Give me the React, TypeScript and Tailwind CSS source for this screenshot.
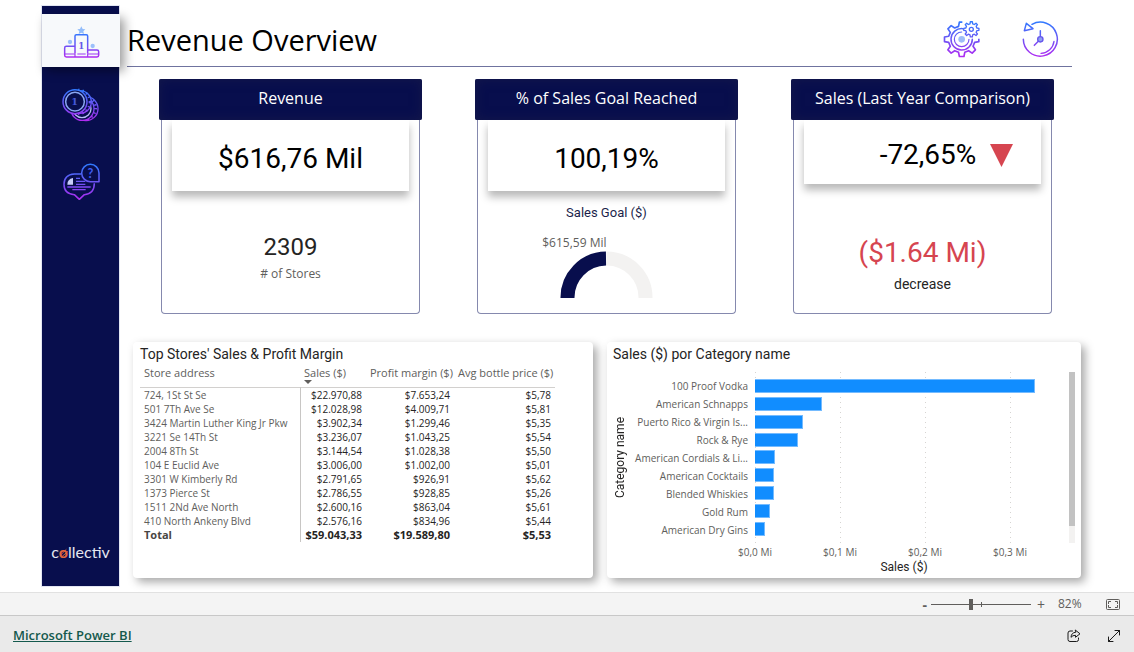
import React, { useState } from "react";

const SANS = "font-['Open_Sans','Noto_Sans',sans-serif]";
const DIN = "font-['Roboto','Liberation_Sans',sans-serif]";

function gearPath(cx: number, cy: number, outer: number, inner: number, teeth: number, turn: number) {
  const points: string[] = [];
  const step = (Math.PI * 2) / teeth;
  const offsets: [number, number][] = [
    [-0.3, inner],
    [-0.17, outer],
    [0.17, outer],
    [0.3, inner],
  ];
  for (let i = 0; i < teeth; i++) {
    offsets.forEach(([o, r]) => {
      const a = turn + (i + o) * step;
      points.push(`${(cx + Math.cos(a) * r).toFixed(1)} ${(cy + Math.sin(a) * r).toFixed(1)}`);
    });
  }
  return `M${points.join("L")}Z`;
}

function Gradient({ id, y1, y2 }: { id: string; y1: number; y2: number }) {
  return (
    <linearGradient id={id} gradientUnits="userSpaceOnUse" x1="0" x2="0" y1={y1} y2={y2}>
      <stop offset="0" stopColor="#2f7bff" />
      <stop offset="0.5" stopColor="#6b54f5" />
      <stop offset="1" stopColor="#b02bf2" />
    </linearGradient>
  );
}

function PodiumIcon() {
  return (
    <svg width="40" height="36" viewBox="63 72 120 108" fill="none" aria-hidden="true">
      <defs>
        <Gradient id="podium" y1={95} y2={170} />
      </defs>
      <g stroke="url(#podium)" strokeWidth="4.500" strokeLinejoin="round">
        <path d="M105 158V105q0-4 4-4h30q4 0 4 4v53" />
        <path d="M105 136H79q-5 0-5 5v22q0 5 5 5h92q5 0 5-5v-11q0-5-5-5h-28" />
        <path d="M74 159h31M112 159h25M143 159h33M105 159v9M143 159v9" strokeWidth="3.500" />
      </g>
      <text x="124" y="144" textAnchor="middle" fontSize="26" fontWeight="bold" fill="#6557e8" fontFamily="DejaVu Serif, serif">
        1
      </text>
      <path d="M124 76l4 8 8 1-6 6 2 8-8-4-8 4 2-8-6-6 8-1z" fill="#93bdfa" />
      <circle cx="90" cy="123" r="6.500" fill="#9cc0fb" />
      <circle cx="158" cy="135" r="6.500" fill="#9cc0fb" />
    </svg>
  );
}

function CoinsIcon() {
  return (
    <svg width="40" height="36" viewBox="63 261 120 108" fill="none" aria-hidden="true">
      <defs>
        <Gradient id="coins" y1={266} y2={362} />
      </defs>
      <circle cx="138" cy="326" r="36" stroke="url(#coins)" strokeWidth="4" />
      <circle cx="133" cy="324" r="33" stroke="url(#coins)" strokeWidth="10" strokeDasharray="4 9" />
      <circle cx="127" cy="326" r="35" fill="#080e4d" stroke="url(#coins)" strokeWidth="4" />
      <circle cx="126" cy="326" r="27" stroke="#b9bff5" strokeWidth="4" />
      <circle cx="120" cy="306" r="34" fill="#080e4d" stroke="url(#coins)" strokeWidth="4" />
      <circle cx="114" cy="306" r="36" stroke="url(#coins)" strokeWidth="8" strokeDasharray="4 9" />
      <circle cx="105" cy="305" r="36" fill="#080e4d" stroke="url(#coins)" strokeWidth="4.500" />
      <circle cx="105" cy="305" r="28" stroke="#8aa6f2" strokeWidth="4.500" />
      <text x="104" y="315" textAnchor="middle" fontSize="29" fontWeight="bold" fill="#4457d8" fontFamily="DejaVu Serif, serif">
        1
      </text>
    </svg>
  );
}

function ChatIcon() {
  return (
    <svg width="40" height="40" viewBox="63 486 120 120" fill="none" aria-hidden="true">
      <defs>
        <Gradient id="chat" y1={492} y2={600} />
      </defs>
      <g stroke="url(#chat)" strokeWidth="4.500" strokeLinejoin="round">
        <path d="M124 522h-21q-31 2-31 31t31 31l15 14 15-14q30-2 30-34" />
        <path d="M177 545h-26a26 26 0 1 1 26-26z" />
        <path d="M108 535h12M108 544h28M108 553h28M82 561h70M97 569h40" strokeWidth="4" />
      </g>
      <path d="M82 554q0-17 17-20v20z" fill="#c7cdf8" />
      <text x="151" y="533" textAnchor="middle" fontSize="38" fontWeight="bold" fill="#3f5cf0" fontFamily="Lato, sans-serif">
        ?
      </text>
    </svg>
  );
}

function GearsIcon() {
  return (
    <svg width="40" height="40" viewBox="36 30 120 120" fill="none" aria-hidden="true">
      <defs>
        <Gradient id="gears" y1={34} y2={140} />
        <mask id="gearGap">
          <rect x="36" y="30" width="120" height="120" fill="#fff" />
          <path d="M97 30h60v56h-20L97 60z" fill="#000" />
        </mask>
      </defs>
      <g stroke="url(#gears)" strokeWidth="5" strokeLinejoin="round" strokeLinecap="round">
        <path d={gearPath(95, 88, 52, 40, 8, 0)} mask="url(#gearGap)" />
        <path d="M98 56a32 32 0 1 0 29 32" strokeWidth="4.500" />
        <path d="M95 66a22 22 0 1 0 22 22" strokeWidth="3.500" />
        <path d={gearPath(124, 58, 23, 17, 8, 0)} strokeWidth="4" />
        <circle cx="124" cy="58" r="6" strokeWidth="4" />
      </g>
      <circle cx="95" cy="88" r="10" fill="#9fbcf8" />
    </svg>
  );
}

function HistoryIcon() {
  return (
    <svg width="40" height="40" viewBox="273 30 120 120" fill="none" aria-hidden="true">
      <defs>
        <Gradient id="history" y1={34} y2={140} />
      </defs>
      <g stroke="url(#history)" strokeWidth="4.500" strokeLinejoin="round" strokeLinecap="round">
        <path d="M280 88a51 51 0 1 0 26-45" />
        <path d="M289 40l-6 22 26-6z" />
        <path d="M372 94a41 41 0 0 1-39 36" strokeWidth="4" />
        <path d="M331 62v18M325 94l-12 12" />
      </g>
      <circle cx="331" cy="88" r="8" fill="#8fa0f0" stroke="#6656ec" strokeWidth="4" />
    </svg>
  );
}

function Logo() {
  return (
    <div className="flex justify-center pb-[22px] font-['Lato',sans-serif] text-[16px] leading-6 text-[#e4e6f0]">
      c
      <span className="relative font-bold text-[#e2653c]">
        o
        <svg className="absolute inset-x-0 top-2 h-[10px] w-full" viewBox="0 0 10 10" aria-hidden="true">
          <path d="M1 8L8 1M2 10L10 3" stroke="#e2653c" strokeWidth="1" />
        </svg>
      </span>
      llectiv
    </div>
  );
}

function Sidebar() {
  return (
    <nav aria-label="Report pages" className="flex h-[580px] w-[77px] shrink-0 flex-col bg-[#080e4d] pt-2 outline outline-[#e3e6f2]">
      <button aria-label="Revenue" className="z-10 flex h-[53px] w-[78px] items-center justify-center bg-[#f7f9fb] pt-1 shadow-[4px_4px_10px_rgba(0,0,0,0.4)]">
        <PodiumIcon />
      </button>
      <button aria-label="Sales" className="mt-5 flex h-9 w-full items-center justify-center">
        <CoinsIcon />
      </button>
      <button aria-label="Insights" className="mt-[39px] flex h-10 w-full items-center justify-center">
        <ChatIcon />
      </button>
      <div className="mt-auto">
        <Logo />
      </div>
    </nav>
  );
}

function KpiCard({ title, tall, value, children }: { title: string; tall: boolean; value: React.ReactNode; children: React.ReactNode }) {
  return (
    <section className="flex h-[235px] flex-col">
      <h2 className="z-10 flex h-[41px] items-center justify-center rounded-xs bg-[#080e4d] pb-1 text-[16px] text-white shadow-[inset_0_0_12px_#15194a]">
        {title}
      </h2>
      <div className={`mx-[2px] flex flex-1 flex-col rounded-b border border-t-0 border-[#8589ae] px-[10px] ${DIN}`}>
        <div
          className={`flex items-center justify-center bg-white text-[28px] text-black shadow-[0_6px_8px_rgba(0,0,0,0.28)] ${
            tall ? "h-[71px] pt-[6px]" : "h-16 pt-[6px]"
          }`}
        >
          {value}
        </div>
        {children}
      </div>
    </section>
  );
}

const stores = [
  ["724, 1St St Se", "$22.970,88", "$7.653,24", "$5,78"],
  ["501 7Th Ave Se", "$12.028,98", "$4.009,71", "$5,81"],
  ["3424 Martin Luther King Jr Pkw", "$3.902,34", "$1.299,46", "$5,35"],
  ["3221 Se 14Th St", "$3.236,07", "$1.043,25", "$5,54"],
  ["2004 8Th St", "$3.144,54", "$1.028,38", "$5,50"],
  ["104 E Euclid Ave", "$3.006,00", "$1.002,00", "$5,01"],
  ["3301 W Kimberly Rd", "$2.791,65", "$926,91", "$5,62"],
  ["1373 Pierce St", "$2.786,55", "$928,85", "$5,26"],
  ["1511 2Nd Ave North", "$2.600,16", "$863,04", "$5,61"],
  ["410 North Ankeny Blvd", "$2.576,16", "$834,96", "$5,44"],
];

function StoresPanel() {
  return (
    <section className="rounded bg-white px-[7px] pt-1 shadow-[4px_4px_10px_rgba(0,0,0,0.35)]">
      <h2 className={`text-[14px] leading-4 text-[#252423] ${DIN}`}>Top Stores' Sales &amp; Profit Margin</h2>
      <table className="w-[415px] table-fixed border-collapse whitespace-nowrap text-[11px] leading-[14px] text-[#252423]">
        <colgroup>
          <col className="w-40" />
          <col className="w-[66px]" />
          <col className="w-[88px]" />
          <col className="w-[101px]" />
        </colgroup>
        <thead className="text-[#605e5c]">
          <tr className="h-[25px] border-b border-[#d2d0ce] text-left align-top">
            <th className="px-1 pt-1 font-normal">Store address</th>
            <th className="px-1 pt-1 font-normal" aria-sort="descending">
              <span className="relative">
                Sales ($)
                <svg className="absolute left-0 top-[15px]" width="8" height="4" viewBox="0 0 8 4" aria-hidden="true">
                  <path d="M0 0h8L4 4z" fill="#605e5c" />
                </svg>
              </span>
            </th>
            <th className="px-1 pt-1 font-normal">Profit margin ($)</th>
            <th className="px-1 pt-1 font-normal">Avg bottle price ($)</th>
          </tr>
        </thead>
        <tbody className="text-[10px]">
          {stores.map(([name, sales, profit, price]) => (
            <tr key={name} className="h-[14px]">
              <td className="border-r border-[#c8c6c4] px-1 text-[#605e5c]">{name}</td>
              <td className="px-1 text-right">{sales}</td>
              <td className="px-1 text-right">{profit}</td>
              <td className="px-1 text-right">{price}</td>
            </tr>
          ))}
        </tbody>
        <tfoot>
          <tr className="h-[14px] font-bold">
            <td className="border-r border-[#c8c6c4] px-1 text-[#484644]">Total</td>
            <td className="px-1 text-right">$59.043,33</td>
            <td className="px-1 text-right">$19.589,80</td>
            <td className="px-1 text-right">$5,53</td>
          </tr>
        </tfoot>
      </table>
    </section>
  );
}

const AXIS_MAX = 0.36;
const categories: [string, number][] = [
  ["100 Proof Vodka", 0.329],
  ["American Schnapps", 0.079],
  ["Puerto Rico & Virgin Is...", 0.057],
  ["Rock & Rye", 0.051],
  ["American Cordials & Li...", 0.023],
  ["American Cocktails", 0.022],
  ["Blended Whiskies", 0.022],
  ["Gold Rum", 0.018],
  ["American Dry Gins", 0.012],
];
const ticks: [string, number][] = [
  ["$0,0 Mi", 0],
  ["$0,1 Mi", 0.1],
  ["$0,2 Mi", 0.2],
  ["$0,3 Mi", 0.3],
];
const percent = (v: number) => `${(v / AXIS_MAX) * 100}%`;

function CategoryPanel() {
  return (
    <section className="rounded bg-white px-[6px] pt-1 shadow-[4px_4px_10px_rgba(0,0,0,0.35)]">
      <h2 className={`text-[14px] leading-4 text-[#252423] ${DIN}`}>Sales ($) por Category name</h2>
      <div className="flex pt-[10px]">
        <div className={`flex h-[171px] w-[14px] items-center justify-center text-[12px] leading-[14px] text-[#252423] ${DIN}`}>
          <span className="rotate-180 whitespace-nowrap [writing-mode:vertical-rl]">Category name</span>
        </div>
        <div className="grid h-[171px] w-[121px] grid-rows-9 whitespace-nowrap pb-1 pt-[6px] text-right text-[10px] text-[#605e5c]">
          {categories.map(([name]) => (
            <span key={name} className="flex items-center justify-end">
              {name}
            </span>
          ))}
        </div>
        <div className="ml-[7px] flex-1">
          <div className="relative h-[171px]">
            {ticks.map(([label, v]) => (
              <div
                key={label}
                className="absolute inset-y-0 w-px bg-[repeating-linear-gradient(#d6d4d2_0_1px,transparent_1px_5px)]"
                style={{ left: percent(v) }}
              />
            ))}
            <div className="relative grid h-full grid-rows-9 items-center py-[5px]">
              {categories.map(([name, v]) => (
                <div key={name} className="h-[14px] border-y border-r border-[#74bbff] bg-[#118dff]" style={{ width: percent(v) }} />
              ))}
            </div>
          </div>
          <div className="relative h-[18px] text-[10px] leading-[18px] text-[#605e5c]">
            {ticks.map(([label, v]) => (
              <span key={label} className="absolute -translate-x-1/2 whitespace-nowrap" style={{ left: percent(v) }}>
                {label}
              </span>
            ))}
          </div>
          <p className={`pr-2 text-center text-[12px] leading-3 text-[#252423] ${DIN}`}>Sales ($)</p>
        </div>
        <div className="ml-2 h-[171px] w-[6px] bg-[#f3f2f1]" aria-hidden="true">
          <div className="h-[154px] bg-[#c2c2c2]" />
        </div>
      </div>
    </section>
  );
}

function ZoomBar() {
  const [zoom, setZoom] = useState(82);
  return (
    <div className="flex h-6 items-center justify-end border-b border-t border-b-[#c8c8c8] border-t-[#e1e1e1] bg-[#f4f4f4] pr-[14px] text-[12px] text-[#605e5c]">
      <button aria-label="Zoom out" className="px-1 text-[14px] font-bold" onClick={() => setZoom(Math.max(10, zoom - 10))}>
        -
      </button>
      <div className="relative flex w-[100px] items-center">
        <div className="absolute left-1/2 h-[5px] w-px bg-[#605e5c]" />
        <input
          type="range"
          aria-label="Zoom"
          min={10}
          max={190}
          value={zoom}
          onChange={(e) => setZoom(Number(e.target.value))}
          className="relative h-[11px] w-full appearance-none bg-[linear-gradient(#605e5c,#605e5c)] bg-[length:100%_1px] bg-center bg-no-repeat [&::-webkit-slider-thumb]:h-[11px] [&::-webkit-slider-thumb]:w-1 [&::-webkit-slider-thumb]:appearance-none [&::-webkit-slider-thumb]:bg-[#605e5c]"
        />
      </div>
      <button aria-label="Zoom in" className="pl-[6px] pr-[5px] text-[14px]" onClick={() => setZoom(Math.min(190, zoom + 10))}>
        +
      </button>
      <span className="ml-2 w-[26px]">{zoom}%</span>
      <button aria-label="Fit to page" className="ml-[22px]">
        <svg width="14" height="11" viewBox="0 0 14 11" fill="none" stroke="#605e5c">
          <rect x="0.5" y="0.5" width="13" height="10" rx="1" />
          <path d="M5 2.5H2.5V5M9 2.5h2.5V5M5 8.5H2.5V6M9 8.5h2.5V6" />
        </svg>
      </button>
    </div>
  );
}

function Footer() {
  return (
    <footer className="flex h-9 items-center bg-[#eaeaea] pl-[13px] pr-[13px] pt-1">
      <a href="#powerbi" className="text-[13px] font-semibold text-[#14594d] underline">
        Microsoft Power BI
      </a>
      <button aria-label="Share" className="ml-auto">
        <svg width="14" height="14" viewBox="0 0 14 14" fill="none" stroke="#1b1b1b" strokeLinejoin="round" strokeLinecap="round">
          <path d="M5.500 2H3Q1 2 1 4v6.500q0 2 2 2h6.500q2 0 2-2V9" />
          <path d="M8.500 1.200L13 4.800 8.500 8.300V6.300Q5.500 6.200 4 8.300 4.300 3.600 8.500 3.200z" />
        </svg>
      </button>
      <button aria-label="Full screen" className="ml-[26px]">
        <svg width="14" height="14" viewBox="0 0 14 14" fill="none" stroke="#1b1b1b" strokeLinecap="round" strokeLinejoin="round">
          <path d="M1.500 12.500l11-11M8 1.500h4.500V6M1.500 8v4.500H6" />
        </svg>
      </button>
    </footer>
  );
}

export default function App() {
  return (
    <div className={`flex min-h-screen flex-col bg-white ${SANS}`}>
      <div className="flex flex-1 pb-[6px] pl-[42px] pt-[6px]">
        <Sidebar />
        <main className="min-w-0 flex-1">
          <header className="ml-2 mr-[62px] flex h-[61px] items-center border-b border-[#6f739f] pt-[7px]">
            <h1 className="text-[29px] text-black">Revenue Overview</h1>
            <button aria-label="Settings" className="ml-auto">
              <GearsIcon />
            </button>
            <button aria-label="History" className="ml-[39px] mr-[11px]">
              <HistoryIcon />
            </button>
          </header>
          <div className="mt-3 grid grid-cols-3 gap-[53px] pl-10 pr-20">
            <KpiCard title="Revenue" tall value="$616,76 Mil">
              <p className="mt-[41px] text-center text-[24px] leading-[30px] text-[#252423]">2309</p>
              <p className={`mt-1 text-center text-[12px] leading-4 text-[#605e5c] ${SANS}`}># of Stores</p>
            </KpiCard>
            <KpiCard title="% of Sales Goal Reached" tall value="100,19%">
              <h3 className="mt-[14px] text-center text-[13px] leading-4 text-[#1b1f4b]">Sales Goal ($)</h3>
              <p className={`mr-[50%] mt-[14px] text-right text-[12px] leading-4 text-[#605e5c] ${SANS}`}>$615,59 Mil</p>
              <svg className="mx-auto" width="93" height="47" viewBox="0 0 93 47" fill="none" role="img" aria-label="Sales goal gauge">
                <path d="M46.500 7.500a39 39 0 0 1 39 39.500" stroke="#f3f2f1" strokeWidth="14" />
                <path d="M7.500 47a39 39 0 0 1 38.500-39.500" stroke="#080e4d" strokeWidth="14" />
              </svg>
            </KpiCard>
            <KpiCard
              title="Sales (Last Year Comparison)"
              tall={false}
              value={
                <span className="flex items-center gap-[14px] pl-12">
                  -72,65%
                  <svg width="23" height="23" viewBox="0 0 23 23" aria-label="down">
                    <path d="M0 0h23L11.500 23z" fill="#d64550" />
                  </svg>
                </span>
              }
            >
              <p className="mt-[51px] text-center text-[28px] leading-9 text-[#d64550]">($1.64 Mi)</p>
              <p className="mt-[5px] text-center text-[14px] leading-4 text-[#252423]">decrease</p>
            </KpiCard>
          </div>
          <div className="mt-7 grid h-[236px] grid-cols-[460fr_474fr] gap-[14px] pl-[14px] pr-[53px]">
            <StoresPanel />
            <CategoryPanel />
          </div>
        </main>
      </div>
      <ZoomBar />
      <Footer />
    </div>
  );
}
